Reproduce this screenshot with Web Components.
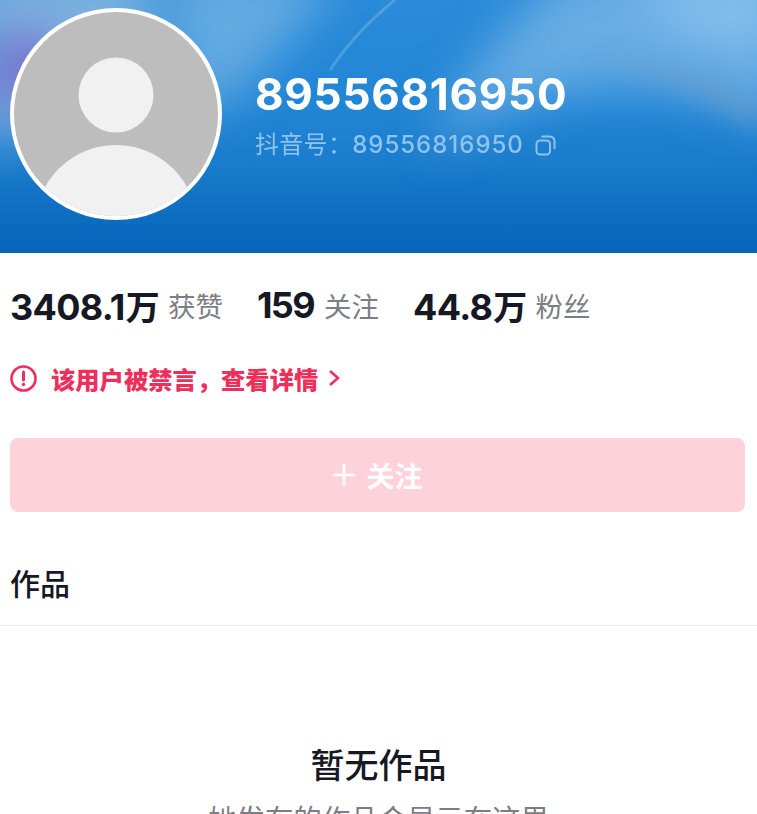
<!DOCTYPE html>
<html lang="zh">
<head>
<meta charset="utf-8">
<style>
  html, body { margin: 0; height: 814px; overflow: hidden; background: #fff; }
  body { font-family: "Inter", "Noto Sans CJK SC", sans-serif; }
</style>
</head>
<body>
<profile-header name="89556816950" account="89556816950"></profile-header>
<profile-stats></profile-stats>
<ban-notice>该用户被禁言&#xFF0C;查看详情</ban-notice>
<follow-button>关注</follow-button>
<works-tab>作品</works-tab>
<empty-works title="暂无作品" hint="她发布的作品会显示在这里"></empty-works>

<script>
class ProfileHeader extends HTMLElement {
    connectedCallback() {
        const name = this.getAttribute('name');
        const account = this.getAttribute('account');
        this.attachShadow({ mode: 'open' }).innerHTML = `
            <style>
                :host { display: block; height: 253px; position: relative; overflow: hidden;
                    background: linear-gradient(180deg, #2a8bd9 0%, #2286d6 40%, #1a7ccc 65%, #0a6abf 90%, #0766ba 100%); }
                .glow { position: absolute; inset: 0; }
                .row { position: relative; display: flex; align-items: flex-start; padding: 8px 0 0 10px; }
                .avatar { width: 212px; height: 212px; flex: none; display: block; }
                .info { margin-left: 33px; padding-top: 57px; }
                .name { font-size: 44px; line-height: 58px; font-weight: 700; color: #fff; letter-spacing: .7px; }
                .account { display: flex; align-items: center; margin-top: 5px; font-size: 24px; line-height: 34px; color: #8fc3ec; letter-spacing: .3px; }
                .account span span { font-weight: 500; letter-spacing: 1px; }
                .account svg { margin-left: 11px; }
            </style>
            <svg class="glow" viewBox="0 0 757 253" preserveAspectRatio="none">
                <defs>
                    <filter id="soft" x="-30%" y="-30%" width="160%" height="160%"><feGaussianBlur stdDeviation="24"/></filter>
                    <filter id="softer" x="-30%" y="-30%" width="160%" height="160%"><feGaussianBlur stdDeviation="10"/></filter>
                </defs>
                <g filter="url(#soft)">
                    <path d="M-30 -30 H150 V60 L60 130 L-30 140Z" fill="#8cbae0" opacity=".85"/>
                    <ellipse cx="25" cy="70" rx="40" ry="45" fill="#7568cd" opacity=".9"/>
                    <path d="M170 -30 H340 C300 30 260 70 220 110 L180 100Z" fill="#8cc2ea" opacity=".6"/>
                    <path d="M430 150 C460 80 510 20 570 -30 H790 V130 C660 60 530 80 430 150Z" fill="#8fc4ec" opacity=".62"/>
                    <path d="M620 -30 H790 V50 L680 30Z" fill="#a0cff0" opacity=".55"/>
                </g>
                <g filter="url(#softer)">
                    <path d="M590 60 C640 70 690 90 757 130 V100 C700 70 640 60 590 60Z" fill="#7f9fc0" opacity=".35"/>
                </g>
                <path d="M330 70 C350 40 370 20 395 0" fill="none" stroke="#fff" stroke-opacity=".18" stroke-width="3"/>
            </svg>
            <div class="row">
                <svg class="avatar" viewBox="0 0 212 212">
                    <defs><clipPath id="c"><circle cx="106" cy="106" r="102"/></clipPath></defs>
                    <circle cx="106" cy="106" r="106" fill="#fff"/>
                    <circle cx="106" cy="106" r="102" fill="#bdbdbd"/>
                    <g clip-path="url(#c)" fill="#f1f1f1">
                        <circle cx="106" cy="87" r="37.5"/>
                        <circle cx="106" cy="218" r="81"/>
                    </g>
                </svg>
                <div class="info">
                    <div class="name">${name}</div>
                    <div class="account">
                        <span>抖音号&#xFF1A;<span>${account}</span></span>
                        <svg width="21" height="21" viewBox="0 0 21 21" fill="none" stroke="#8fc3ec" stroke-width="2">
                            <rect x="1.5" y="5.5" width="13.5" height="14" rx="3.5"/>
                            <path d="M6.5 1.5h8.5a4.5 4.5 0 0 1 4.5 4.5V14"/>
                        </svg>
                    </div>
                </div>
            </div>`;
    }
}

class ProfileStats extends HTMLElement {
    connectedCallback() {
        const stats = [['3408.1', '万', '获赞'], ['159', '', '关注'], ['44.8', '万', '粉丝']];
        this.attachShadow({ mode: 'open' }).innerHTML = `
            <style>
                :host { display: flex; gap: 34px; padding: 27px 10px 0; height: 50px; align-items: center; }
                .stat { display: flex; align-items: center; gap: 9px; }
                b { font-size: 36px; font-weight: 700; color: #161823; letter-spacing: -.7px; }
                b.short { letter-spacing: -1.6px; }
                b i { font-style: normal; font-size: 34px; margin-left: 1px; }
                span { font-size: 27.5px; color: #7c7e85; }
            </style>
            ${stats.map(([n, u, l]) => `<div class="stat"><b class="${u ? '' : 'short'}">${n}<i>${u}</i></b><span>${l}</span></div>`).join('')}`;
    }
}

class BanNotice extends HTMLElement {
    connectedCallback() {
        this.attachShadow({ mode: 'open' }).innerHTML = `
            <style>
                :host { display: flex; align-items: center; height: 40px; margin-top: 28px; padding-left: 10px;
                    color: #ee2f5b; font-size: 24.3px; font-weight: 900; font-family: "Noto Sans CJK SC", sans-serif; }
                svg { margin-right: 14px; flex: none; }
                .chev { margin: 0 0 0 9px; }
            </style>
            <svg width="27" height="27" viewBox="0 0 27 27" fill="none" stroke="#ee2f5b">
                <circle cx="13.5" cy="13.5" r="12" stroke-width="2.6"/>
                <path d="M13.5 7v8" stroke-width="3" stroke-linecap="round"/>
                <circle cx="13.5" cy="19.5" r="1.7" fill="#ee2f5b" stroke="none"/>
            </svg>
            <slot></slot>
            <svg class="chev" width="14" height="20" viewBox="0 0 14 20" fill="none" stroke="#ee2f5b" stroke-width="2.6">
                <path d="M3 3l8 7-8 7"/>
            </svg>`;
    }
}

class FollowButton extends HTMLElement {
    connectedCallback() {
        this.attachShadow({ mode: 'open' }).innerHTML = `
            <style>
                :host { display: flex; align-items: center; justify-content: center; height: 74px; margin: 40px 12px 0 10px;
                    background: #fed2db; border-radius: 8px; color: #fff; font-size: 28px; font-weight: 700;
                    font-family: "Noto Sans CJK SC", sans-serif; }
                svg { margin-right: 10px; }
            </style>
            <svg width="24" height="24" viewBox="0 0 24 24" stroke="#fff" stroke-width="2.6"><path d="M12 1v22M1 12h22"/></svg>
            <slot></slot>`;
    }
}

class WorksTab extends HTMLElement {
    connectedCallback() {
        this.attachShadow({ mode: 'open' }).innerHTML = `
            <style>
                :host { display: flex; align-items: center; height: 114px; box-sizing: border-box; padding: 26px 0 0 10px;
                    border-bottom: 1px solid #ececed; color: #161823; font-size: 30px; font-weight: 500;
                    font-family: "Noto Sans CJK SC", sans-serif; }
            </style>
            <slot></slot>`;
    }
}

class EmptyWorks extends HTMLElement {
    connectedCallback() {
        this.attachShadow({ mode: 'open' }).innerHTML = `
            <style>
                :host { display: block; text-align: center; padding-top: 112px; font-family: "Noto Sans CJK SC", sans-serif; }
                h2 { margin: 0; font-size: 34px; line-height: 52px; font-weight: 500; color: #161823; }
                p { margin: 8px 0 0; font-size: 28.4px; line-height: 40px; color: #7c7e85; }
            </style>
            <h2>${this.getAttribute('title')}</h2>
            <p>${this.getAttribute('hint')}</p>`;
    }
}

customElements.define('profile-header', ProfileHeader);
customElements.define('profile-stats', ProfileStats);
customElements.define('ban-notice', BanNotice);
customElements.define('follow-button', FollowButton);
customElements.define('works-tab', WorksTab);
customElements.define('empty-works', EmptyWorks);
</script>
</body>
</html>
